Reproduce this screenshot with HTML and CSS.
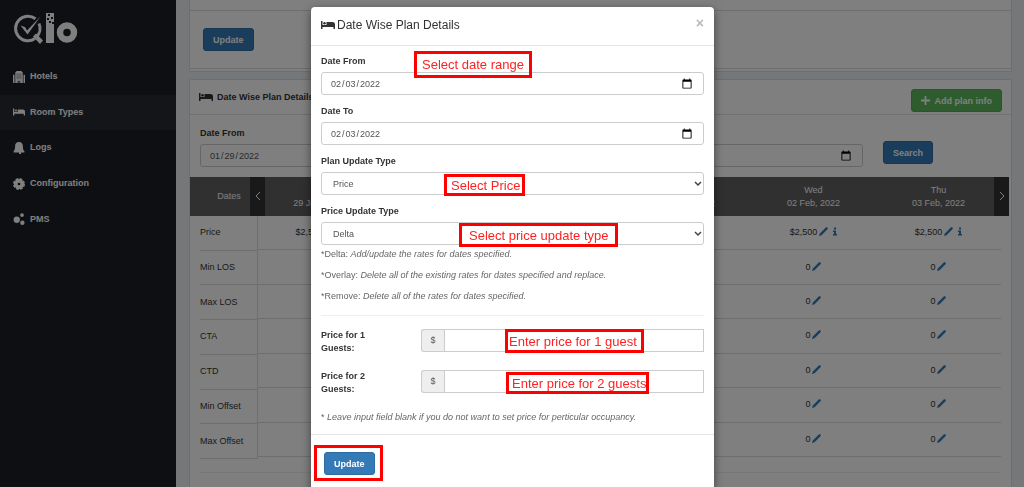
FILE: index.html
```html
<!DOCTYPE html>
<html lang="en">

<head>
    <meta charset="UTF-8">
    <meta name="viewport" content="width=device-width, initial-scale=1.0">
    <title>Qlo - Room Types</title>
    <link rel="stylesheet" href="styles.css">
</head>

<body>
    <svg class="sprite">
        <symbol id="icon-bed" viewBox="0 0 28 16">
            <path d="M0 0h3v8h25v8h-3v-4H3v4H0z" />
            <circle cx="7" cy="4.500" r="2.500" />
            <path d="M11 2h12a5 5 0 0 1 5 5v2H11z" />
        </symbol>
        <symbol id="icon-pencil" viewBox="0 0 16 16">
            <path d="M0 16l1.500-4.500L12 1c1-1 2-1 3 0s1 2 0 3L4.500 14.500z" />
        </symbol>
        <symbol id="icon-info" viewBox="0 0 8 16">
            <path d="M2 0h4v4H2zM0 6h6v7h2v3H0v-3h2V9H0z" />
        </symbol>
        <symbol id="icon-chevron" viewBox="0 0 8 6">
            <path d="M1 1l3 3 3-3" fill="none" stroke="#444" stroke-width="1.500" />
        </symbol>
    </svg>

    <div class="page">
        <aside class="sidebar">
            <svg class="logo" viewBox="0 0 65 34" role="img" aria-label="Qlo">
                <path d="M22.500 5.800A12.300 12.300 0 1 0 22 25.500" fill="none" stroke="#fff" stroke-width="3" />
                <path d="M26 10.500a12.300 12.300 0 0 1-3 14" fill="none" stroke="#fff" stroke-width="3" />
                <path d="M20 23.500l3-3 7 7-3 3.500z" fill="#fff" />
                <path d="M7.500 12.500l4.500 1.500 2 3.500L27.500 3.500 14.500 21.500z" fill="#fff" />
                <path d="M33 0h8v30h-8z" fill="#fff" />
                <path d="M35 1h2v2h-2zM38 4h2v2h-2zM34 5h2v2h-2zM36 8h2v2h-2zM39 9h2v2h-2z" fill="#1c1f26" />
                <circle cx="54" cy="19.500" r="7" fill="none" stroke="#fff" stroke-width="6.500" />
            </svg>
            <nav class="menu">
                <a href="#" class="menu-item">
                    <svg class="menu-icon" viewBox="0 0 16 16">
                        <path d="M3 2l2-2h6l2 2v14H3zM0 5h2v11H0zM14 5h2v11h-2z" />
                        <path d="M5 3h1v8H5zM7.500 3h1v8h-1zM10 3h1v8h-1zM6 13h4v3H6z" fill="#777" />
                    </svg>
                    Hotels
                </a>
                <a href="#" class="menu-item active">
                    <svg class="menu-icon"><use href="#icon-bed" /></svg>
                    Room Types
                </a>
                <a href="#" class="menu-item">
                    <svg class="menu-icon" viewBox="0 0 16 16">
                        <path d="M8 0c4 0 5.200 3 5.200 6 0 4 .8 5 2 6v2H.8v-2c1.200-1 2-2 2-6 0-3 1.200-6 5.200-6zM8 14h3a2 2 0 0 1-3 2z" />
                    </svg>
                    Logs
                </a>
                <a href="#" class="menu-item">
                    <svg class="menu-icon" viewBox="0 0 16 16">
                        <circle cx="8" cy="8" r="4.300" fill="none" stroke="#fff" stroke-width="5" />
                        <circle cx="8" cy="8" r="6.800" fill="none" stroke="#fff" stroke-width="2.400" stroke-dasharray="3.600 1.740" />
                    </svg>
                    Configuration
                </a>
                <a href="#" class="menu-item">
                    <svg class="menu-icon" viewBox="0 0 16 16">
                        <circle cx="5" cy="9" r="4.200" />
                        <circle cx="12" cy="2.700" r="2.500" />
                        <circle cx="12.500" cy="13" r="2.900" />
                    </svg>
                    PMS
                </a>
            </nav>
        </aside>

        <main class="content">
            <section class="panel panel-update">
                <div class="panel-inner">
                    <button type="button" class="btn btn-primary">Update</button>
                </div>
            </section>

            <section class="panel panel-plan">
                <header class="panel-heading">
                    <svg class="bed-icon"><use href="#icon-bed" /></svg>
                    <h3>Date Wise Plan Details</h3>
                    <button type="button" class="btn btn-success">
                        <svg class="plus-icon" viewBox="0 0 8 8"><path d="M3.200 0h1.600v3.200H8v1.600H4.800V8H3.200V4.800H0V3.200h3.200z" /></svg>
                        Add plan info
                    </button>
                </header>

                <form class="filter">
                    <div class="filter-field">
                        <label for="filter-from">Date From</label>
                        <input type="date" id="filter-from" class="form-control" value="2022-01-29">
                    </div>
                    <div class="filter-field">
                        <label for="filter-to">Date To</label>
                        <input type="date" id="filter-to" class="form-control" value="2022-02-03">
                    </div>
                    <button type="button" class="btn btn-primary">Search</button>
                </form>

                <div class="rates">
                    <table class="rate-names">
                        <thead><tr><th>Dates</th></tr></thead>
                        <tbody></tbody>
                    </table>
                    <table class="rate-values">
                        <thead><tr></tr></thead>
                        <tbody></tbody>
                    </table>
                    <button type="button" class="arrow arrow-prev" aria-label="Previous">
                        <svg viewBox="0 0 6 10"><path d="M5 1L1 5l4 4" /></svg>
                    </button>
                    <button type="button" class="arrow arrow-next" aria-label="Next">
                        <svg viewBox="0 0 6 10"><path d="M1 1l4 4-4 4" /></svg>
                    </button>
                </div>
                <hr class="panel-line">
            </section>
        </main>
    </div>

    <div class="backdrop"></div>

    <div class="modal" role="dialog" aria-labelledby="modal-title">
        <header class="modal-header">
            <svg class="bed-icon"><use href="#icon-bed" /></svg>
            <h2 id="modal-title">Date Wise Plan Details</h2>
            <button type="button" class="close" aria-label="Close">×</button>
        </header>

        <div class="modal-body">
            <div class="form-group">
                <label for="date-from">Date From</label>
                <input type="date" id="date-from" class="form-control" value="2022-02-03">
            </div>
            <div class="form-group">
                <label for="date-to">Date To</label>
                <input type="date" id="date-to" class="form-control" value="2022-02-03">
            </div>
            <div class="form-group">
                <label for="plan-type">Plan Update Type</label>
                <div class="select-wrapper">
                    <select id="plan-type" class="form-control">
                        <option>Price</option>
                    </select>
                    <svg class="chevron"><use href="#icon-chevron" /></svg>
                </div>
            </div>
            <div class="form-group">
                <label for="price-type">Price Update Type</label>
                <div class="select-wrapper">
                    <select id="price-type" class="form-control">
                        <option>Delta</option>
                        <option>Overlay</option>
                        <option>Remove</option>
                    </select>
                    <svg class="chevron"><use href="#icon-chevron" /></svg>
                </div>
            </div>
            <p class="help">*Delta: <em>Add/update the rates for dates specified.</em></p>
            <p class="help">*Overlay: <em>Delete all of the existing rates for dates specified and replace.</em></p>
            <p class="help">*Remove: <em>Delete all of the rates for dates specified.</em></p>
            <hr class="modal-line">
            <div class="price-row">
                <label for="price-1">Price for 1<br>Guests:</label>
                <div class="input-group">
                    <span class="addon">$</span>
                    <input type="text" id="price-1" class="form-control">
                </div>
            </div>
            <div class="price-row">
                <label for="price-2">Price for 2<br>Guests:</label>
                <div class="input-group">
                    <span class="addon">$</span>
                    <input type="text" id="price-2" class="form-control">
                </div>
            </div>
            <p class="note">* <em>Leave input field blank if you do not want to set price for perticular occupancy.</em></p>
        </div>

        <footer class="modal-footer">
            <button type="button" class="btn btn-primary">Update</button>
        </footer>

        <div class="mark mark-date">Select date range</div>
        <div class="mark mark-plan">Select Price</div>
        <div class="mark mark-type">Select price update type</div>
        <div class="mark mark-guest">Enter price for 1 guest</div>
        <div class="mark mark-guests">Enter price for 2 guests</div>
        <div class="mark mark-update"></div>
    </div>

    <script>
        const days = [
            ['Sat', '29 Jan, 2022'],
            ['Sun', '30 Jan, 2022'],
            ['Mon', '31 Jan, 2022'],
            ['Tue', '01 Feb, 2022'],
            ['Wed', '02 Feb, 2022'],
            ['Thu', '03 Feb, 2022']
        ];
        const rows = ['Price', 'Min LOS', 'Max LOS', 'CTA', 'CTD', 'Min Offset', 'Max Offset'];

        const pencil = '<svg class="pencil"><use href="#icon-pencil" /></svg>';
        const info = '<svg class="info"><use href="#icon-info" /></svg>';

        const createCell = (row) => {
            return row === 'Price' ? `<td>$2,500${pencil}${info}</td>` : `<td>0${pencil}</td>`;
        }

        document.querySelector('.rate-values thead tr').innerHTML =
            days.map(day => `<th>${day[0]}<br>${day[1]}</th>`).join('');

        document.querySelector('.rate-names tbody').innerHTML =
            rows.map(row => `<tr><td>${row}</td></tr>`).join('');

        document.querySelector('.rate-values tbody').innerHTML =
            rows.map(row => `<tr>${days.map(() => createCell(row)).join('')}</tr>`).join('');
    </script>
</body>

</html>
```
FILE: styles.css
```css
* {
    box-sizing: border-box;
}

body {
    margin: 0;
    height: 100vh;
    overflow: hidden;
    font-family: "Liberation Sans", Arial, sans-serif;
    font-size: 9px;
    line-height: 13px;
    color: #333;
    background-color: #ebeef2;
}

h2, h3, p {
    margin: 0;
}

label {
    display: block;
    font-weight: bold;
}

input, select, button {
    font-family: inherit;
    font-size: inherit;
}

.sprite {
    position: absolute;
    width: 0;
    height: 0;
}

.page {
    display: flex;
    height: 100vh;
    overflow: hidden;
}

/* sidebar */
.sidebar {
    flex: none;
    width: 176px;
    padding-top: 13px;
    background-color: #1c1f26;
}

.logo {
    display: block;
    width: 65px;
    height: 34px;
    margin-left: 13px;
}

.menu {
    display: grid;
    grid-auto-rows: 1fr;
    height: 178px;
    margin-top: 12px;
}

.menu-item {
    display: flex;
    align-items: center;
    gap: 5px;
    padding-left: 13px;
    font-weight: bold;
    color: #fff;
    text-decoration: none;
}

.menu-item.active {
    background-color: #272a33;
}

.menu-icon {
    width: 12px;
    height: 12px;
    fill: #fff;
}

/* panels */
.content {
    flex: 1;
    padding: 0 12px 0 13px;
}

.panel {
    background-color: #fff;
    border: 1px solid #d8dde3;
    border-radius: 2px;
}

.panel-update {
    height: 72px;
    margin-bottom: 7px;
    padding-top: 10px;
    border-top: none;
}

.panel-inner {
    height: 59px;
    padding: 17px 13px;
    border-top: 1px solid #ddd;
    border-bottom: 1px solid #ddd;
}

.panel-plan {
    height: 440px;
}

.panel-heading {
    display: flex;
    align-items: center;
    height: 35px;
    padding: 0 9px;
    border-bottom: 1px solid #e0e0e0;
}

.panel-heading h3 {
    flex: 1;
    margin-left: 4px;
    font-size: 9px;
}

.panel-heading .btn {
    margin-bottom: -7px;
}

.bed-icon {
    width: 14px;
    height: 8px;
    fill: #333;
}

.btn {
    height: 23px;
    padding: 0 9px;
    border: 1px solid #2e6da4;
    border-radius: 3px;
    font-weight: bold;
    color: #fff;
    cursor: pointer;
}

.btn-primary {
    background-color: #337ab7;
}

.btn-success {
    border-color: #4cae4c;
    background-color: #5cb85c;
}

.plus-icon {
    width: 9px;
    height: 9px;
    margin-right: 2px;
    vertical-align: -1px;
    fill: #fff;
}

.form-control {
    display: block;
    width: 100%;
    height: 23px;
    padding: 0 10px 0 8px;
    border: 1px solid #ccc;
    border-radius: 3px;
    color: #555;
    background-color: #fff;
}

.form-control::-webkit-calendar-picker-indicator {
    width: 12px;
    height: 12px;
    padding: 0;
}

.select-wrapper {
    position: relative;
}

.select-wrapper .form-control {
    padding-left: 11px;
    appearance: none;
}

.chevron {
    position: absolute;
    top: 9px;
    right: 2px;
    width: 8px;
    height: 6px;
    pointer-events: none;
}

.filter {
    display: flex;
    align-items: flex-end;
    gap: 20px;
    padding: 12px 78px 10px 10px;
}

.filter-field {
    flex: 1;
}

.filter-field label {
    margin-bottom: 4px;
}

.filter .btn {
    margin-bottom: 3px;
}

/* rates table */
.rates {
    position: relative;
    display: flex;
    align-items: flex-start;
    margin-right: 2px;
    padding: 0 8px 0 10px;
    background: linear-gradient(#606060, #606060) top / 100% 39px no-repeat;
}

.rates table {
    border-collapse: separate;
    border-spacing: 0;
}

.rates th {
    height: 39px;
    padding: 0;
    font-weight: normal;
    color: #fff;
}

.rates td {
    padding: 0;
    border-bottom: 1px solid #ddd;
}

.rate-names {
    width: 58px;
    height: 282px;
}

.rate-names td {
    border-right: 1px solid #ddd;
}

.rate-values {
    flex: 1;
    height: 280px;
    table-layout: fixed;
    text-align: center;
}

.pencil, .info {
    width: 9px;
    height: 9px;
    margin-left: 2px;
    vertical-align: -1px;
    fill: #337ab7;
}

.info {
    width: 4px;
    margin-left: 5px;
}

.arrow {
    position: absolute;
    top: 0;
    width: 15px;
    height: 39px;
    padding: 0;
    border: none;
    background-color: #333;
}

.arrow svg {
    width: 6px;
    height: 10px;
    fill: none;
    stroke: #fff;
}

.arrow-prev {
    left: 60px;
}

.arrow-next {
    right: 0;
}

.panel-line {
    margin: 13px 10px 0;
    border: none;
    border-top: 1px solid #eee;
}

/* modal */
.backdrop {
    position: fixed;
    inset: 0;
    background-color: rgba(0, 0, 0, 0.5);
}

.modal {
    position: absolute;
    top: 7px;
    left: 50%;
    width: 403px;
    margin-left: -201px;
    border-radius: 4px;
    background-color: #fff;
    box-shadow: 0 3px 10px rgba(0, 0, 0, 0.5);
}

.modal-header {
    display: flex;
    align-items: center;
    height: 39px;
    padding: 0 10px 2px;
    border-bottom: 1px solid #e5e5e5;
}

.modal-header h2 {
    flex: 1;
    margin-left: 2px;
    font-size: 12px;
    font-weight: normal;
}

.close {
    padding: 0 0 5px;
    border: none;
    font-size: 14px;
    font-weight: bold;
    color: #bbb;
    background: none;
    cursor: pointer;
}

.modal-body {
    padding: 9px 10px 10px;
}

.form-group {
    margin-bottom: 10px;
}

.form-group label {
    margin-bottom: 4px;
}

.form-group:nth-child(4) {
    margin-bottom: 3px;
}

.help, .note {
    color: #666;
}

.help {
    margin-bottom: 8px;
}

.modal-line {
    margin: 12px 0 13px;
    border: none;
    border-top: 1px solid #eee;
}

.price-row {
    display: flex;
    margin-bottom: 15px;
}

.price-row label {
    width: 100px;
}

.input-group {
    display: flex;
    flex: 1;
}

.addon {
    width: 23px;
    height: 23px;
    border: 1px solid #ccc;
    border-right: none;
    border-radius: 3px 0 0 3px;
    line-height: 21px;
    text-align: center;
    color: #555;
    background-color: #eee;
}

.input-group .form-control {
    flex: 1;
    border-radius: 0;
}

.modal-footer {
    padding: 17px 13px;
    border-top: 1px solid #e5e5e5;
}

/* red callouts */
.mark {
    position: absolute;
    display: flex;
    align-items: center;
    border: 3px solid #f00;
    font-size: 13px;
    white-space: nowrap;
    color: #f22;
}

.mark-date {
    top: 44px;
    left: 103px;
    width: 118px;
    height: 27px;
    padding-left: 5px;
}

.mark-plan {
    top: 167px;
    left: 133px;
    width: 81px;
    height: 22px;
    padding-left: 4px;
}

.mark-type {
    top: 216px;
    left: 148px;
    width: 159px;
    height: 24px;
    padding-left: 7px;
}

.mark-guest {
    top: 322px;
    left: 194px;
    width: 139px;
    height: 24px;
    padding-left: 1px;
}

.mark-guests {
    top: 365px;
    left: 195px;
    width: 143px;
    height: 22px;
    padding-left: 3px;
}

.mark-update {
    top: 438px;
    left: 3px;
    width: 69px;
    height: 36px;
}
```
